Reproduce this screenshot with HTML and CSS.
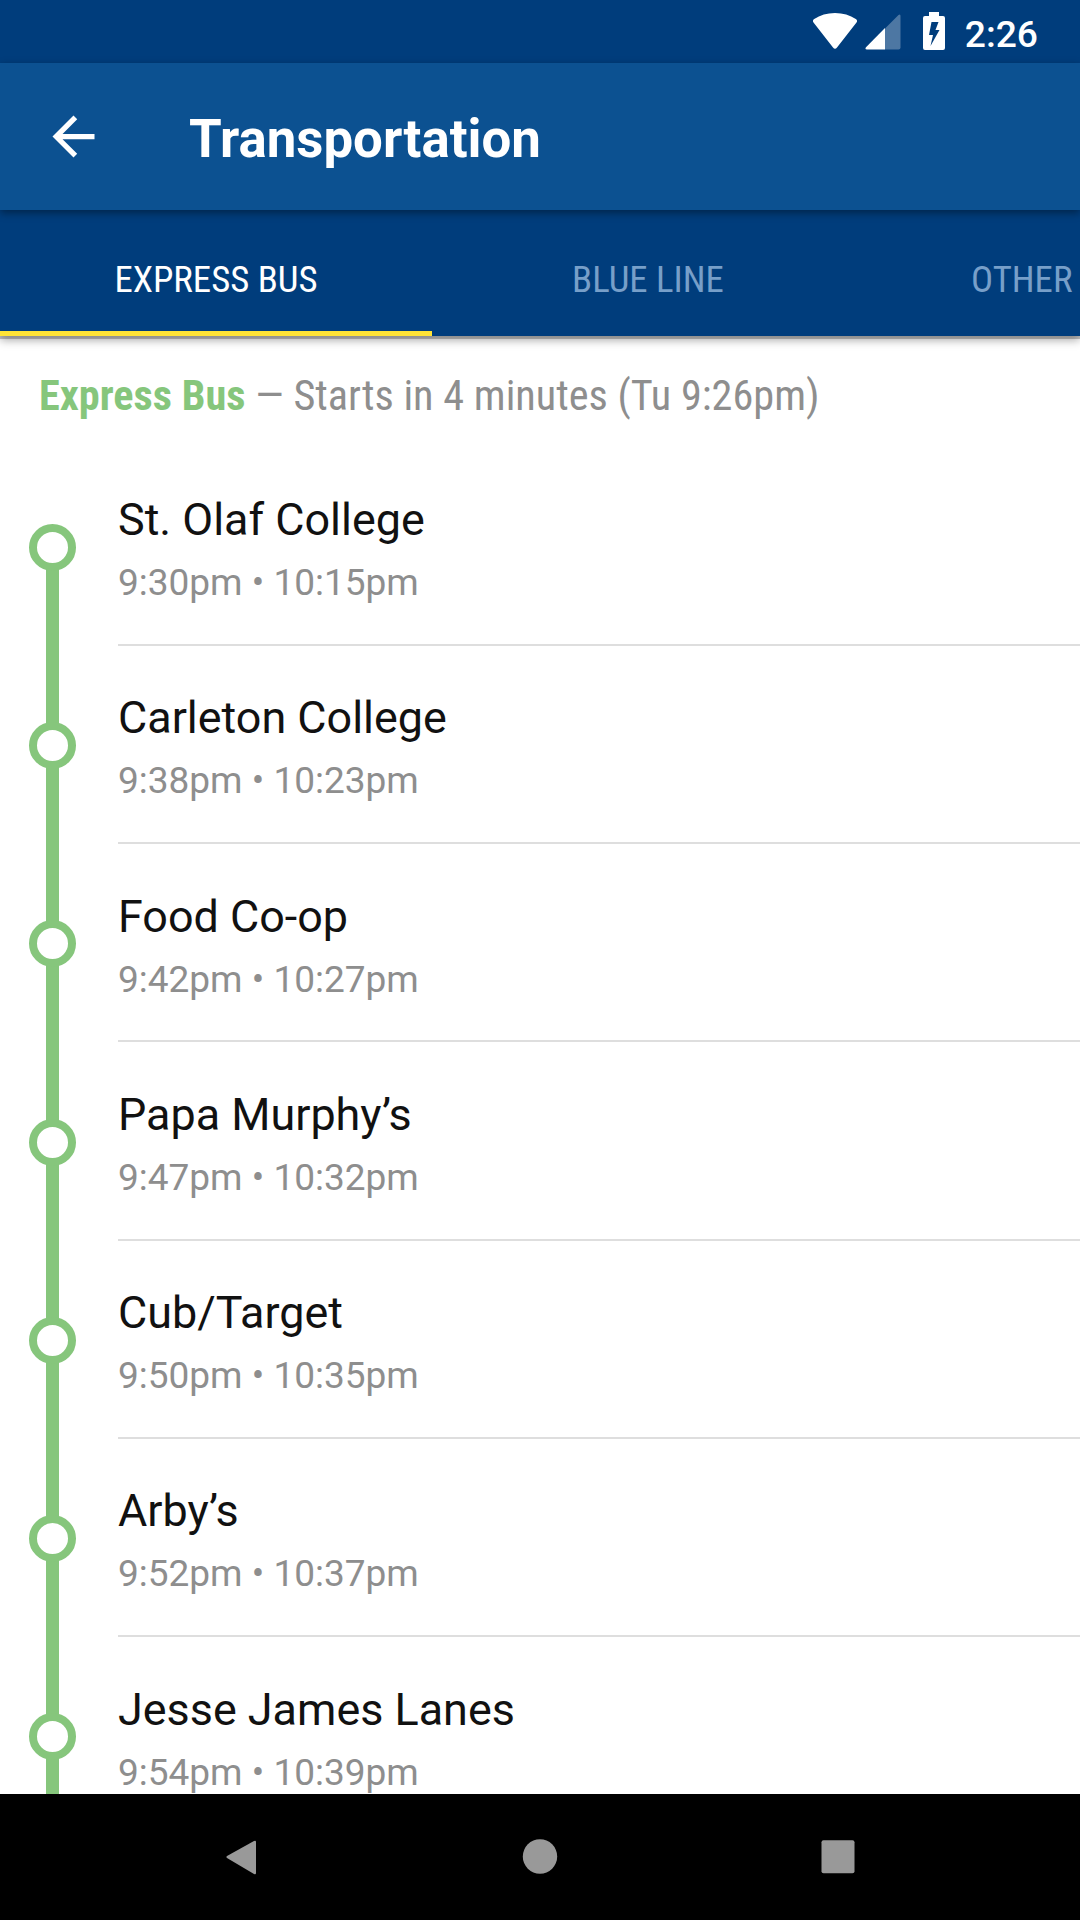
FILE: index.html
```html
<!DOCTYPE html>
<html lang="en">
<head>
    <meta charset="UTF-8">
    <meta name="viewport" content="width=device-width, initial-scale=1.0">
    <title>Transportation</title>
    <link rel="stylesheet" href="styles.css">
</head>
<body>
    <div class="screen">
        <div class="status-bar">
            <svg class="wifi" width="46" height="38" viewBox="0 0 46 38">
                <path d="M1.500 10.500 Q0 8.500 2.200 7 Q11 1 23 1 Q35 1 43.800 7 Q46 8.500 44.500 10.500 L25 35.500 Q23 38 21 35.500 Z" fill="#fff"/>
            </svg>
            <svg class="signal" width="36" height="36" viewBox="0 0 36 36">
                <path d="M20 14.500 L33.500 1 Q35.500 -0.500 35.500 2 V33.500 Q35.500 35.500 33.500 35.500 H20 Z" fill="#fff" fill-opacity="0.3"/>
                <path d="M20 14 V35.500 H2 Q-0.500 35.300 1 33.300 Z" fill="#fff"/>
            </svg>
            <svg class="battery" width="22" height="38" viewBox="0 0 22 38">
                <path fill-rule="evenodd" d="M6 0 H16 V4 H20 Q22 4 22 6 V36 Q22 38 20 38 H2 Q0 38 0 36 V6 Q0 4 2 4 H6 Z M8.500 10 L6 23 H10 L7.500 34 L16.500 18 H12.500 L15.500 10 Z" fill="#fff"/>
            </svg>
            <span class="clock">2:26</span>
        </div>

        <div class="header">
            <svg class="back" width="63" height="63" viewBox="0 0 24 24">
                <path d="M20 11H7.830l5.590-5.590L12 4l-8 8 8 8 1.410-1.410L7.830 13H20v-2z" fill="#fff"/>
            </svg>
            <h1>Transportation</h1>
        </div>

        <div class="tabs">
            <div class="tab active">EXPRESS BUS</div>
            <div class="tab">BLUE LINE</div>
            <div class="tab cut">OTHER</div>
        </div>

        <div class="content">
            <div class="line-title"><b>Express Bus</b> — Starts in 4 minutes (Tu 9:26pm)</div>

            <div class="stop first">
                <div class="track"><div class="dot"></div></div>
                <div class="info">
                    <div class="name">St. Olaf College</div>
                    <div class="times">9:30pm • 10:15pm</div>
                </div>
            </div>
            <div class="stop">
                <div class="track"><div class="dot"></div></div>
                <div class="info">
                    <div class="name">Carleton College</div>
                    <div class="times">9:38pm • 10:23pm</div>
                </div>
            </div>
            <div class="stop">
                <div class="track"><div class="dot"></div></div>
                <div class="info">
                    <div class="name">Food Co-op</div>
                    <div class="times">9:42pm • 10:27pm</div>
                </div>
            </div>
            <div class="stop">
                <div class="track"><div class="dot"></div></div>
                <div class="info">
                    <div class="name">Papa Murphy’s</div>
                    <div class="times">9:47pm • 10:32pm</div>
                </div>
            </div>
            <div class="stop">
                <div class="track"><div class="dot"></div></div>
                <div class="info">
                    <div class="name">Cub/Target</div>
                    <div class="times">9:50pm • 10:35pm</div>
                </div>
            </div>
            <div class="stop">
                <div class="track"><div class="dot"></div></div>
                <div class="info">
                    <div class="name">Arby’s</div>
                    <div class="times">9:52pm • 10:37pm</div>
                </div>
            </div>
            <div class="stop">
                <div class="track"><div class="dot"></div></div>
                <div class="info">
                    <div class="name">Jesse James Lanes</div>
                    <div class="times">9:54pm • 10:39pm</div>
                </div>
            </div>
        </div>

        <div class="nav-bar">
            <svg width="36" height="36" viewBox="0 0 36 36">
                <path d="M31 2 L4 17 Q2.500 18 4 19 L31 35 Q33 36 33 34 V3 Q33 1 31 2 Z" fill="#999"/>
            </svg>
            <svg width="36" height="36" viewBox="0 0 36 36">
                <circle cx="18" cy="17.500" r="17.200" fill="#999"/>
            </svg>
            <svg width="36" height="36" viewBox="0 0 36 36">
                <rect x="1.500" y="1.300" width="33" height="33" rx="2" fill="#999"/>
            </svg>
        </div>
    </div>
</body>
</html>
```

FILE: styles.css
```css
body {
    margin: 0;
    font-family: Roboto, sans-serif;
    background-color: #fff;
}

.screen {
    width: 1080px;
    height: 1920px;
    display: flex;
    flex-direction: column;
    overflow: hidden;
}

/* Android status bar */
.status-bar {
    height: 63px;
    flex-shrink: 0;
    box-sizing: border-box;
    padding: 12px 42px 0 0;
    display: flex;
    align-items: flex-start;
    justify-content: flex-end;
    background-color: #003d7c;
    color: #fff;
}

.signal {
    margin: 2px 0 0 7px;
}

.battery {
    margin-left: 22px;
}

.clock {
    margin: 1px 0 0 20px;
    font-size: 37.2px;
    line-height: 42px;
    font-weight: 500;
}

.header {
    height: 147px;
    flex-shrink: 0;
    display: flex;
    align-items: center;
    background-color: #0c5191;
    color: #fff;
    z-index: 2;
    box-shadow: 0 3px 8px rgba(0, 0, 0, 0.4);
}

.back {
    margin-left: 42px;
}

h1 {
    margin: 4px 0 0 84px;
    font-size: 52.8px;
    font-weight: bold;
}

.tabs {
    height: 126px;
    flex-shrink: 0;
    display: flex;
    background-color: #003d7c;
    z-index: 1;
    box-shadow: 0 3px 0 rgba(0, 0, 0, 0.22), 0 4px 9px rgba(0, 0, 0, 0.35);
}

.tab {
    width: 432px;
    flex-shrink: 0;
    box-sizing: border-box;
    padding-top: 9px;
    border-bottom: 5px solid transparent;
    text-align: center;
    line-height: 121px;
    font-size: 36.8px;
    font-stretch: 75%;
    color: #779fc9;
}

.tab.active {
    color: #fff;
    border-bottom-color: #ffe436;
}

.tab.cut {
    width: 216px;
    padding-left: 107px;
    text-align: left;
}

.content {
    flex: 1;
    min-height: 0;
    overflow: hidden;
}

.line-title {
    height: 111.5px;
    box-sizing: border-box;
    padding: 35px 0 0 39px;
    font-size: 42.25px;
    line-height: 49px;
    font-stretch: 75%;
    color: #8e8e8e;
    white-space: nowrap;
}

.line-title b {
    color: #86c67c;
}

.stop {
    height: 198.3px;
    display: flex;
}

/* The coloured line runs behind the dots */
.track {
    width: 105px;
    margin-bottom: -1px;
    display: flex;
    align-items: center;
    justify-content: center;
    background: linear-gradient(#86c67c, #86c67c) center / 13px 100% no-repeat;
}

.first .track {
    background-size: 13px 50%;
    background-position: center bottom;
}

.dot {
    width: 31px;
    height: 31px;
    border: 8px solid #86c67c;
    border-radius: 50%;
    background-color: #fff;
}

.info {
    flex: 1;
    box-sizing: border-box;
    margin-left: 13px;
    padding-top: 44.5px;
    border-bottom: 2px solid #dedede;
}

.name {
    font-size: 44.9px;
    line-height: 56px;
    color: #111;
}

.times {
    margin-top: 12px;
    font-size: 37px;
    line-height: 46px;
    color: #8e8e8e;
}

.nav-bar {
    height: 126px;
    flex-shrink: 0;
    display: flex;
    align-items: center;
    justify-content: center;
    gap: 262.5px;
    padding-right: 1px;
    background-color: #000;
}
```
